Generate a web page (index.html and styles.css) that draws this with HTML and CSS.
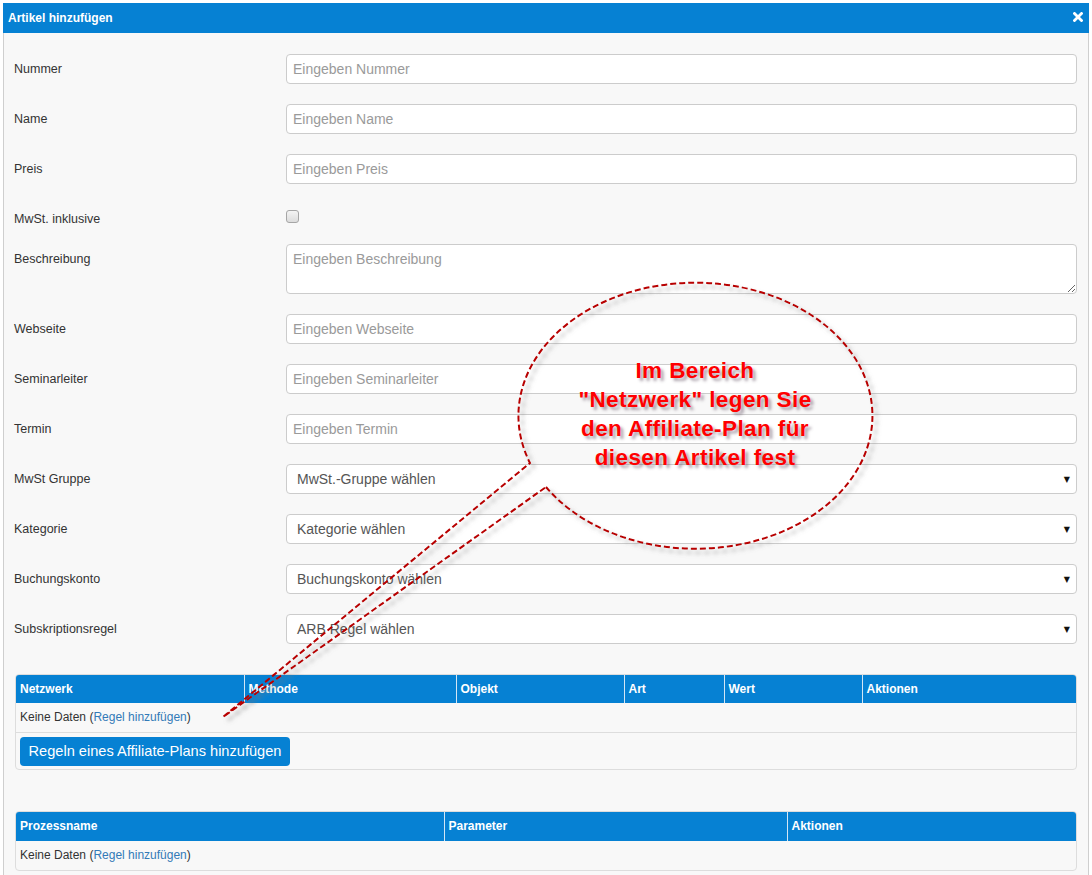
FILE: index.html
```html
<!DOCTYPE html>
<html lang="de">
<head>
<meta charset="utf-8">
<title>Artikel hinzufügen</title>
<link rel="stylesheet" href="styles.css">
</head>
<body>
<div class="modal">
  <div class="modal-header">
    <span class="modal-title">Artikel hinzufügen</span>
    <svg class="close" width="10" height="10" viewBox="0 0 10 10"><path d="M1.5 1.5 L8.5 8.5 M8.5 1.5 L1.5 8.5" stroke="#fff" stroke-width="2.8" stroke-linecap="square"/></svg>
  </div>
  <div class="modal-body">
    <div class="form-row"><label class="lbl">Nummer</label><input class="ctl" type="text" placeholder="Eingeben Nummer"></div>
    <div class="form-row"><label class="lbl">Name</label><input class="ctl" type="text" placeholder="Eingeben Name"></div>
    <div class="form-row"><label class="lbl">Preis</label><input class="ctl" type="text" placeholder="Eingeben Preis"></div>
    <div class="form-row row-check"><label class="lbl">MwSt. inklusive</label><span class="check"></span></div>
    <div class="form-row"><label class="lbl">Beschreibung</label><textarea class="ctl area" placeholder="Eingeben Beschreibung"></textarea></div>
    <div class="form-row"><label class="lbl">Webseite</label><input class="ctl" type="text" placeholder="Eingeben Webseite"></div>
    <div class="form-row"><label class="lbl">Seminarleiter</label><input class="ctl" type="text" placeholder="Eingeben Seminarleiter"></div>
    <div class="form-row"><label class="lbl">Termin</label><input class="ctl" type="text" placeholder="Eingeben Termin"></div>
    <div class="form-row"><label class="lbl">MwSt Gruppe</label><div class="sel"><span>MwSt.-Gruppe wählen</span><span class="arrow">▼</span></div></div>
    <div class="form-row"><label class="lbl">Kategorie</label><div class="sel"><span>Kategorie wählen</span><span class="arrow">▼</span></div></div>
    <div class="form-row"><label class="lbl">Buchungskonto</label><div class="sel"><span>Buchungskonto wählen</span><span class="arrow">▼</span></div></div>
    <div class="form-row"><label class="lbl">Subskriptionsregel</label><div class="sel"><span>ARB Regel wählen</span><span class="arrow">▼</span></div></div>

    <div class="panel panel-first">
      <table class="grid">
        <thead>
          <tr>
            <th class="c-netz">Netzwerk</th>
            <th class="c-meth">Methode</th>
            <th class="c-obj">Objekt</th>
            <th class="c-art">Art</th>
            <th class="c-wert">Wert</th>
            <th class="c-akt">Aktionen</th>
          </tr>
        </thead>
        <tbody>
          <tr><td colspan="6">Keine Daten (<a href="#">Regel hinzufügen</a>)</td></tr>
        </tbody>
      </table>
      <div class="panel-foot"><button class="btn" type="button">Regeln eines Affiliate-Plans hinzufügen</button></div>
    </div>

    <div class="panel panel-second">
      <table class="grid">
        <thead>
          <tr>
            <th class="c-proz">Prozessname</th>
            <th class="c-param">Parameter</th>
            <th class="c-akt2">Aktionen</th>
          </tr>
        </thead>
        <tbody>
          <tr><td colspan="3">Keine Daten (<a href="#">Regel hinzufügen</a>)</td></tr>
        </tbody>
      </table>
    </div>
  </div>
</div>

<svg class="bubble" width="1092" height="875" viewBox="0 0 1092 875">
  <defs>
    <filter id="sh" x="-20%" y="-20%" width="140%" height="140%">
      <feDropShadow dx="4" dy="4" stdDeviation="2.2" flood-color="#7a7a7a" flood-opacity="0.55"/>
    </filter>
  </defs>
  <path d="M546 487 A177 133 0 1 0 530 463 L223 717 Z" fill="none" stroke="#b80000" stroke-width="2" stroke-dasharray="6 3" filter="url(#sh)"/>
</svg>
<div class="bubble-text">Im Bereich<br>"Netzwerk" legen Sie<br>den Affiliate-Plan für<br>diesen Artikel fest</div>
</body>
</html>
```
FILE: styles.css
```css
html, body {
  margin: 0;
  padding: 0;
  background: #ffffff;
}
body {
  position: relative;
  width: 1092px;
  height: 875px;
  overflow: hidden;
  font-family: "Liberation Sans", Arial, sans-serif;
  color: #333333;
}
.modal {
  margin: 3px 0 0 3px;
  width: 1086px;
}
.modal-header {
  height: 30px;
  background: #0681d3;
  display: flex;
  align-items: center;
  justify-content: space-between;
  padding: 0 6px 0 5px;
  box-sizing: border-box;
}
.modal-title {
  color: #ffffff;
  font-weight: bold;
  font-size: 12px;
  margin-top: -1px;
}
.close {
  display: block;
  margin-top: -2px;
}
.modal-body {
  background: #f8f8f8;
  border-left: 1px solid #cfcfcf;
  border-right: 1px solid #cfcfcf;
  padding: 21px 11px 40px 10px;
  min-height: 900px;
}
.form-row {
  display: grid;
  grid-template-columns: 272px 791px;
  align-items: start;
  margin-bottom: 20px;
}
.lbl {
  font-size: 12.5px;
  line-height: 30px;
  color: #333333;
}
.ctl {
  box-sizing: border-box;
  height: 30px;
  width: 791px;
  border: 1px solid #cccccc;
  border-radius: 4px;
  background: #ffffff;
  font-family: "Liberation Sans", Arial, sans-serif;
  font-size: 14px;
  padding: 0 6px;
  margin: 0;
  color: #555555;
  outline: none;
}
.ctl::placeholder {
  color: #9a9a9a;
}
.area {
  height: 50px;
  padding: 6px 6px;
  resize: vertical;
  display: block;
}
.row-check {
  margin-bottom: 10px;
}
.check {
  display: block;
  width: 11px;
  height: 11px;
  margin-top: 6px;
  border: 1px solid #a6a6a6;
  border-radius: 3px;
  background: linear-gradient(#f4f4f4, #dcdcdc);
}
.sel {
  box-sizing: border-box;
  height: 30px;
  width: 791px;
  border: 1px solid #cccccc;
  border-radius: 4px;
  background: #ffffff;
  font-size: 14px;
  color: #555555;
  display: flex;
  align-items: center;
  justify-content: space-between;
  padding: 0 6px 0 10px;
}
.arrow {
  font-family: "DejaVu Sans", sans-serif;
  font-size: 8px;
  color: #111111;
}
.panel {
  width: 1062px;
  margin-left: 1px;
  border: 1px solid #dddddd;
  border-radius: 4px;
  box-sizing: border-box;
  overflow: hidden;
  background: #f8f8f8;
}
.panel-first {
  margin-top: 30px;
}
.panel-second {
  margin-top: 41px;
}
.grid {
  width: 100%;
  border-collapse: collapse;
  table-layout: fixed;
}
.grid th {
  background: #0681d3;
  color: #ffffff;
  font-size: 12px;
  font-weight: bold;
  text-align: left;
  height: 28px;
  padding: 0 4px;
  border-left: 1px solid #d3e6f5;
  box-sizing: border-box;
}
.panel-second .grid th {
  height: 29px;
}
.grid th:first-child {
  border-left: none;
}
.grid td {
  font-size: 12px;
  height: 29px;
  padding: 0 4px;
  border-bottom: 1px solid #dddddd;
  color: #333333;
  box-sizing: border-box;
}
.panel-second .grid td {
  border-bottom: none;
}
.grid a {
  color: #337ab7;
  text-decoration: none;
}
.c-netz { width: 228px; }
.c-meth { width: 212px; }
.c-obj { width: 168px; }
.c-art { width: 100px; }
.c-wert { width: 138px; }
.c-akt { width: 216px; }
.c-proz { width: 428px; }
.c-param { width: 343px; }
.c-akt2 { width: 291px; }
.panel-foot {
  padding: 4px 4px 3px 4px;
}
.btn {
  width: 270px;
  height: 29px;
  border: none;
  border-radius: 4px;
  background: #0681d3;
  color: #ffffff;
  font-family: "Liberation Sans", Arial, sans-serif;
  font-size: 14.6px;
  padding: 0;
  display: block;
}
.bubble {
  position: absolute;
  top: 0;
  left: 0;
  pointer-events: none;
}
.bubble-text {
  position: absolute;
  top: 356px;
  left: 520px;
  width: 350px;
  text-align: center;
  font-family: "Liberation Sans", Arial, sans-serif;
  font-weight: bold;
  font-size: 22.5px;
  letter-spacing: 0.4px;
  line-height: 29px;
  color: #ff0000;
  text-shadow: 3px 3px 3px rgba(80, 60, 80, 0.45);
}
```
